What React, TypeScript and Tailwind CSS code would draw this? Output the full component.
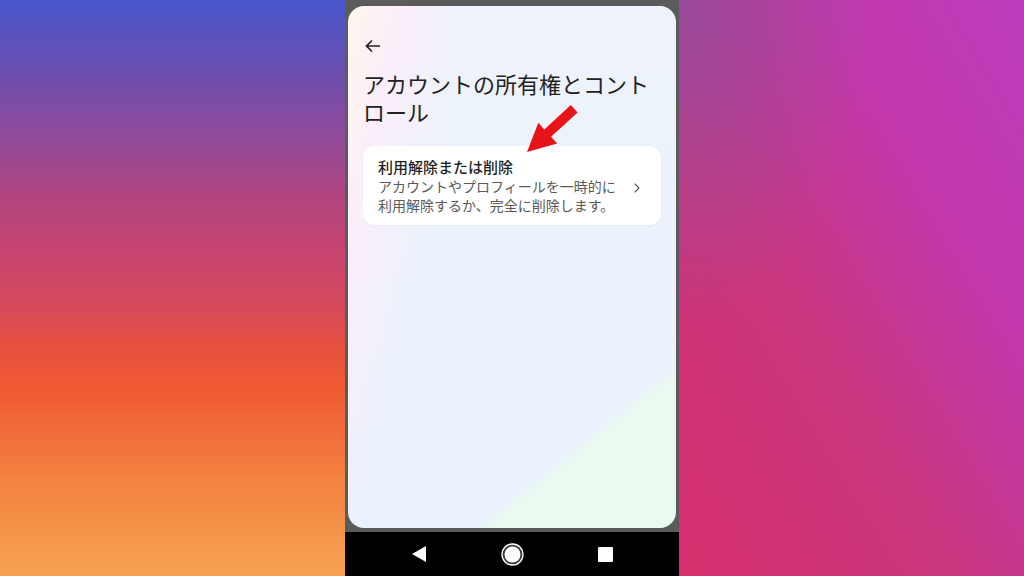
import { ChevronRight } from "lucide-react";

function NavBar() {
  return (
    <div className="mt-[4px] flex h-[44px] items-center justify-center gap-[63px] bg-black">
      <div className="flex w-[30px] justify-center">
        <svg width="16" height="18" viewBox="0 0 16 18">
          <path d="M1 9 L15 1 L15 17 Z" fill="#ffffff" />
        </svg>
      </div>
      <div className="flex w-[30px] justify-center">
        <svg width="23" height="23" viewBox="0 0 23 23">
          <circle cx="11.5" cy="11.5" r="10.5" fill="#3a3a3a" stroke="#ffffff" strokeWidth="1.3" />
          <circle cx="11.5" cy="11.5" r="8" fill="#ffffff" />
        </svg>
      </div>
      <div className="flex w-[30px] justify-center">
        <div className="h-[15px] w-[15px] rounded-[1px] bg-white" />
      </div>
    </div>
  );
}

function DeleteCard() {
  return (
    <div className="mt-[21px] flex items-center rounded-[12px] bg-white pb-[10px] pl-[15px] pr-[16px] pt-[10px] shadow-[0_1px_2px_rgba(0,0,0,0.03)]">
      <div className="flex-1">
        <div className="text-[15px] font-medium leading-[21px] text-[#1f1f1f]">利用解除または削除</div>
        <div className="text-[14px] leading-[19px] text-[#5a5a5a]">
          アカウントやプロフィールを一時的に
          <br />
          利用解除するか、完全に削除します。
        </div>
      </div>
      <ChevronRight size={16} strokeWidth={1.6} className="ml-[6px] mt-[4px] text-[#555555]" />
    </div>
  );
}

export default function App() {
  return (
    <div
      className="relative flex h-[576px] w-[1024px] overflow-hidden"
      style={{ fontFamily: '"Noto Sans CJK JP", "Noto Sans", Roboto, sans-serif' }}
    >
      {/* left backdrop */}
      <div className="h-full w-[345px] bg-[linear-gradient(180deg,#4857ce_0%,#6a4fb0_12%,#8e4a9c_23%,#b0457e_34%,#c84470_44%,#d64a5c_53%,#e6503f_60%,#f05a32_67%,#f26a3a_74%,#f3813f_83%,#f5934a_92%,#f6a252_100%)]" />

      {/* phone */}
      <div className="flex h-full w-[334px] flex-col bg-[#5b5b5b]">
        <div className="mx-[3px] mt-[6px] flex-1 rounded-[16px] bg-[linear-gradient(141deg,rgba(236,250,240,0)_79%,#ebfaf0_81%),linear-gradient(102deg,#fef6ec_0%,#fbeefa_12%,rgba(234,242,252,0)_28%),linear-gradient(180deg,#eef3fb,#e9f1fc)] px-[15px] pt-[32px]">
          <svg width="18" height="16" viewBox="0 0 18 16" className="ml-[1px]">
            <path d="M16 8 H2.5 M8 2.5 L2.5 8 L8 13.5" fill="none" stroke="#222222" strokeWidth="1.7" />
          </svg>
          <h1 className="mt-[15px] text-[22px] font-normal leading-[28px] text-[#222222]">
            アカウントの所有権とコント
            <br />
            ロール
          </h1>
          <DeleteCard />
        </div>
        <NavBar />
      </div>

      {/* right backdrop */}
      <div className="h-full flex-1 bg-[radial-gradient(ellipse_at_0%_0%,rgba(150,75,155,0.95)_0%,rgba(150,75,155,0)_40%),linear-gradient(to_top_right,#d62f6c_0%,#c9367e_40%,#c238ac_70%,#bd3cbc_100%)]" />

      {/* red annotation arrow */}
      <svg className="pointer-events-none absolute inset-0" width="1024" height="576" viewBox="0 0 1024 576">
        <polygon
          points="527,152 538.3,122.8 544.3,129.4 570.8,105.1 577.6,112.5 551.1,136.8 557.2,143.4"
          fill="#e8141a"
        />
      </svg>
    </div>
  );
}
